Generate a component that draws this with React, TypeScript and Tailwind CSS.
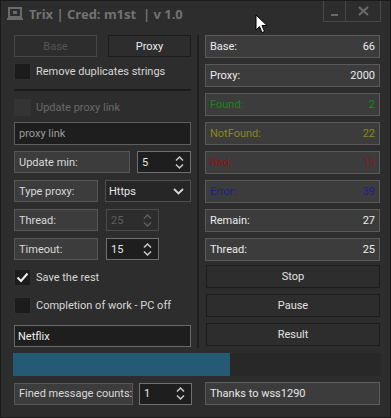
import React from 'react';

const FONT = { fontFamily: 'Roboto, "Noto Sans", sans-serif' };
const TITLE_FONT = { fontFamily: '"Noto Sans", "DejaVu Sans", sans-serif' };

function Chevrons({ dim }: { dim?: boolean }) {
  const c = dim ? '#5e5e5e' : '#c8c8c8';
  return (
    <div className="flex flex-col items-center justify-center gap-[3px]">
      <svg width="9" height="5" viewBox="0 0 9 5">
        <path d="M1 4.5 L4.5 1 L8 4.5" fill="none" stroke={c} strokeWidth="1.5" />
      </svg>
      <svg width="9" height="5" viewBox="0 0 9 5">
        <path d="M1 0.5 L4.5 4 L8 0.5" fill="none" stroke={c} strokeWidth="1.5" />
      </svg>
    </div>
  );
}

function Spin({ value, w, dim }: { value: string; w: string; dim?: boolean }) {
  return (
    <div
      className={
        'h-[22px] flex items-center justify-between pl-[4px] pr-[6px] border ' +
        w +
        (dim ? ' bg-[#2d2d2d] border-[#4b4b4b] text-[#5e5e5e]' : ' bg-[#1e1e1e] border-[#707070] text-[#e6e6e6]')
      }
    >
      <span>{value}</span>
      <Chevrons dim={dim} />
    </div>
  );
}

function Label({ text, w }: { text: string; w: string }) {
  return (
    <div className={'h-[22px] flex items-center pl-[4px] bg-[#3c3c3c] border border-[#575757] text-[#dadada] whitespace-nowrap ' + w}>
      {text}
    </div>
  );
}

function Check({ text, checked, disabled }: { text: string; checked?: boolean; disabled?: boolean }) {
  return (
    <div className="h-[17px] flex items-center gap-[5px]">
      <div
        className={
          'w-[17px] h-[17px] flex items-center justify-center ' +
          (disabled ? 'bg-[#343434]' : 'bg-[#1c1c1c] border border-[#2f2f2f]')
        }
      >
        {checked && (
          <svg width="13" height="11" viewBox="0 0 13 11">
            <path d="M1.5 5.5 L5 9 L11.5 1.5" fill="none" stroke="#f0f0f0" strokeWidth="2" />
          </svg>
        )}
      </div>
      <span className={disabled ? 'text-[#6a6a6a]' : 'text-[#d8d8d8]'}>{text}</span>
    </div>
  );
}

function Stat({ label, value, color }: { label: string; value: string; color: string }) {
  return (
    <div
      className={'h-[23px] flex items-center justify-between px-[4px] bg-[#3c3c3c] border border-[#595959] ' + color}
    >
      <span>{label}</span>
      <span>{value}</span>
    </div>
  );
}

function Btn({ text }: { text: string }) {
  return (
    <div className="h-[23px] flex items-center justify-center border border-[#1c1c1c] text-[#e2e2e2]">{text}</div>
  );
}

export default function App() {
  return (
    <div
      className="relative w-[391px] h-[418px] bg-[#2d2d2d] border border-[#1a1a1a] text-[11px] leading-none overflow-hidden"
      style={FONT}
    >
      {/* title bar */}
      <div className="h-[30px] flex items-start" style={TITLE_FONT}>
        <div className="flex items-center gap-[6px] pl-[6px] pt-[6px]">
          <svg width="16" height="14" viewBox="0 0 16 14">
            <rect x="2" y="1" width="12" height="9" fill="none" stroke="#6a6a6a" strokeWidth="2" />
            <rect x="6" y="4" width="4" height="3" fill="#6a6a6a" />
            <rect x="0" y="11" width="16" height="2" fill="#6a6a6a" />
          </svg>
          <span className="font-bold text-[13px] text-[#727272]">Trix | Cred: m1st&nbsp; | v 1.0</span>
        </div>
        <div className="ml-auto mr-[9px] flex border border-t-0 border-[#474747] h-[21px]">
          <div className="w-[22px] flex items-end justify-center pb-[5px] border-r border-[#474747]">
            <div className="w-[7px] h-[2px] bg-[#6a6a6a]" />
          </div>
          <div className="w-[34px] flex items-center justify-center">
            <svg width="11" height="10" viewBox="0 0 11 10">
              <path d="M1 1 L10 9 M10 1 L1 9" stroke="#6a6a6a" strokeWidth="2.2" />
            </svg>
          </div>
        </div>
      </div>

      {/* body */}
      <div className="flex pt-[4px] pl-[13px]">
        <div className="w-[177px] flex flex-col">
          <div className="flex justify-between h-[22px]">
            <div className="w-[83px] flex items-center justify-center border border-[#474747] text-[#555555]">Base</div>
            <div className="w-[83px] flex items-center justify-center border border-[#1c1c1c] text-[#ececec]">Proxy</div>
          </div>
          <div className="mt-[6px]">
            <Check text="Remove duplicates strings" />
          </div>
          <div className="mt-[9px] h-[2px] bg-[#1c1c1c]" />
          <div className="mt-[8px]">
            <Check text="Update proxy link" disabled />
          </div>
          <div className="mt-[6px] h-[23px] flex items-center pl-[4px] bg-[#1e1e1e] border border-[#5e5e5e] text-[#9c9c9c]">
            proxy link
          </div>
          <div className="mt-[6px] flex justify-between">
            <Label text="Update min:" w="w-[116px]" />
            <Spin value="5" w="w-[54px]" />
          </div>
          <div className="mt-[7px] flex justify-between">
            <Label text="Type proxy:" w="w-[84px]" />
            <div className="w-[86px] h-[22px] flex items-center justify-between pl-[3px] pr-[6px] bg-[#262626] border border-[#4f4f4f] text-[#e6e6e6]">
              <span>Https</span>
              <svg width="11" height="7" viewBox="0 0 11 7">
                <path d="M1 1 L5.5 5.5 L10 1" fill="none" stroke="#d8d8d8" strokeWidth="1.8" />
              </svg>
            </div>
          </div>
          <div className="mt-[7px] flex gap-[8px]">
            <Label text="Thread:" w="w-[84px]" />
            <Spin value="25" w="w-[53px]" dim />
          </div>
          <div className="mt-[7px] flex gap-[8px]">
            <Label text="Timeout:" w="w-[84px]" />
            <Spin value="15" w="w-[53px]" />
          </div>
          <div className="mt-[9px]">
            <Check text="Save the rest" checked />
          </div>
          <div className="mt-[11px]">
            <Check text="Completion of work - PC off" />
          </div>
          <div className="mt-[11px] h-[22px] flex items-center pl-[3px] bg-[#1e1e1e] border border-[#6a6a6a] text-[#f0f0f0]">
            Netflix
          </div>
        </div>

        <div className="ml-[6px] w-[2px] h-[313px] bg-[#1f1f1f]" />

        <div className="ml-[6px] w-[175px] flex flex-col gap-[6px]">
          <Stat label="Base:" value="66" color="text-[#ececec]" />
          <Stat label="Proxy:" value="2000" color="text-[#ececec]" />
          <Stat label="Found:" value="2" color="text-[#138a13]" />
          <Stat label="NotFound:" value="22" color="text-[#8a8a14]" />
          <Stat label="Bad:" value="15" color="text-[#8c1414]" />
          <Stat label="Error:" value="39" color="text-[#1c1c96]" />
          <Stat label="Remain:" value="27" color="text-[#ececec]" />
          <Stat label="Thread:" value="25" color="text-[#ececec]" />
          <div className="ml-[1px] mt-[-2px] flex flex-col gap-[6px]">
            <Btn text="Stop" />
            <Btn text="Pause" />
            <Btn text="Result" />
          </div>
        </div>
      </div>

      {/* progress */}
      <div className="mt-[5px] ml-[12px] w-[368px] h-[23px] bg-[#282828] flex">
        <div className="w-[217px] h-full bg-[#245a73]" />
      </div>

      {/* footer */}
      <div className="mt-[6px] pl-[13px] flex items-center">
        <Label text="Fined message counts:" w="w-[119px]" />
        <div className="ml-[6px]">
          <Spin value="1" w="w-[53px]" />
        </div>
        <div className="ml-[13px] w-[175px] h-[23px] flex items-center pl-[4px] bg-[#3c3c3c] border border-[#5c5c5c] text-[#e6e6e6]">
          Thanks to wss1290
        </div>
      </div>

      {/* mouse cursor */}
      <svg className="absolute left-[254px] top-[13px]" width="13" height="20" viewBox="0 0 13 20">
        <path d="M1 1 L1 16 L4.5 12.5 L7 18.5 L9.5 17.5 L7 11.5 L12 11.5 Z" fill="#ffffff" stroke="#000000" strokeWidth="1" />
      </svg>
    </div>
  );
}
